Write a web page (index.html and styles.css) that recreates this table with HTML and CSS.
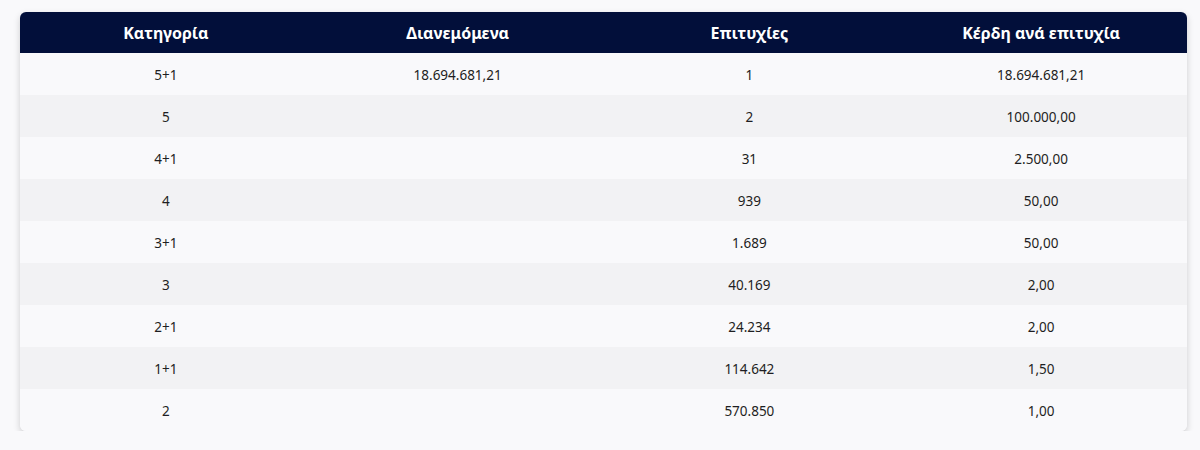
FILE: index.html
```html
<!DOCTYPE html>
<html lang="el">
<head>
<meta charset="utf-8">
<link rel="stylesheet" href="styles.css">
</head>
<body>
<div class="wrap">
<table class="prizes">
<thead>
<tr><th>Κατηγορία</th><th>Διανεμόμενα</th><th>Επιτυχίες</th><th>Κέρδη ανά επιτυχία</th></tr>
</thead>
<tbody>
<tr><td>5+1</td><td>18.694.681,21</td><td>1</td><td>18.694.681,21</td></tr>
<tr><td>5</td><td></td><td>2</td><td>100.000,00</td></tr>
<tr><td>4+1</td><td></td><td>31</td><td>2.500,00</td></tr>
<tr><td>4</td><td></td><td>939</td><td>50,00</td></tr>
<tr><td>3+1</td><td></td><td>1.689</td><td>50,00</td></tr>
<tr><td>3</td><td></td><td>40.169</td><td>2,00</td></tr>
<tr><td>2+1</td><td></td><td>24.234</td><td>2,00</td></tr>
<tr><td>1+1</td><td></td><td>114.642</td><td>1,50</td></tr>
<tr><td>2</td><td></td><td>570.850</td><td>1,00</td></tr>
</tbody>
</table>
</div>
</body>
</html>
```
FILE: styles.css
```css
html, body {
  margin: 0;
  padding: 0;
  background: #f9f9fb;
}
body {
  font-family: "Noto Sans", "DejaVu Sans", sans-serif;
}
.wrap {
  padding: 12px 13px 0 20px;
}
.prizes {
  width: 100%;
  border-collapse: separate;
  border-spacing: 0;
  table-layout: fixed;
  border-radius: 6px;
  overflow: hidden;
  box-shadow: 0 3px 7px rgba(0, 0, 0, 0.18);
}
.prizes th {
  background: #020f3a;
  color: #ffffff;
  font-weight: 700;
  font-size: 16px;
  height: 41px;
  padding: 0;
  text-align: center;
}
.prizes td {
  box-sizing: border-box;
  height: 42px;
  padding: 2px 0 0;
  text-align: center;
  font-size: 13.5px;
  color: #1e1e22;
}
.prizes tbody tr:nth-child(odd) td {
  background: #f9f9fb;
}
.prizes tbody tr:nth-child(even) td {
  background: #f2f2f4;
}
```
